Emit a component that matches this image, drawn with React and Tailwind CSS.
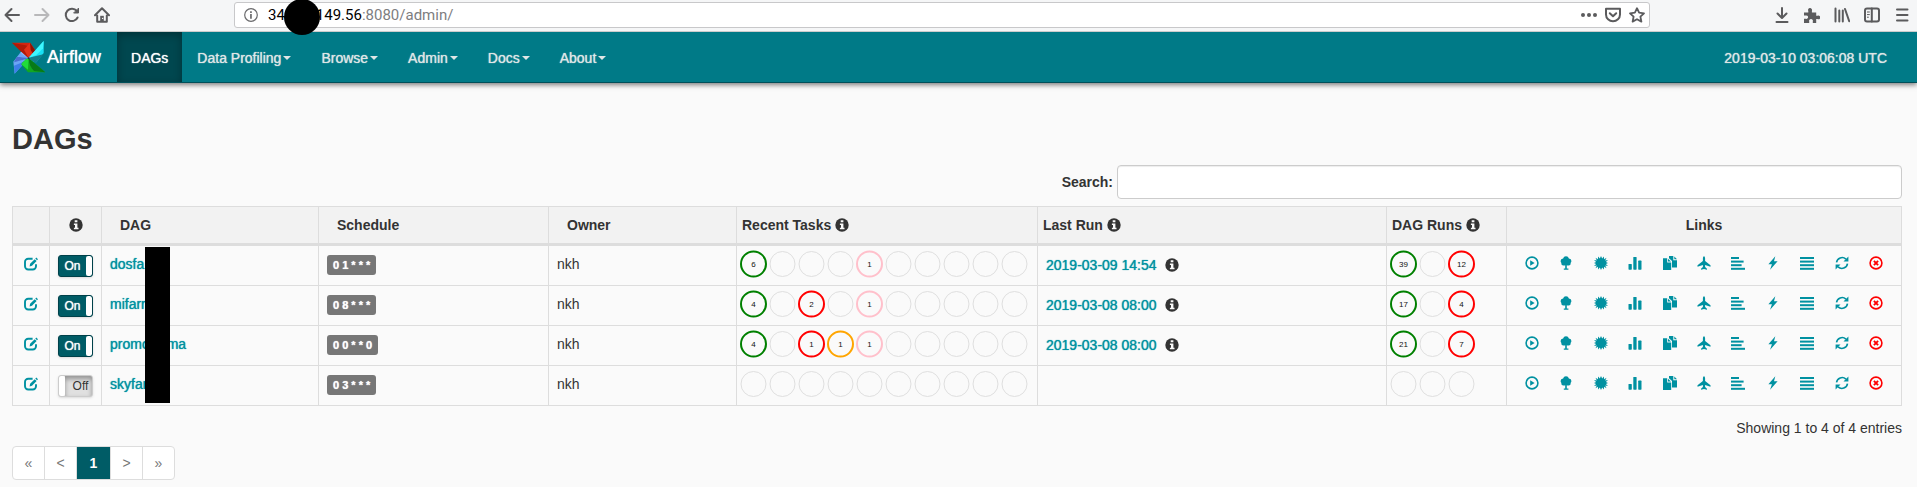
import React from "react";

/* ---------- browser toolbar icons (16px grid) ---------- */

const stroke = {
  fill: "none",
  stroke: "currentColor",
  strokeWidth: 2,
  strokeLinecap: "round",
  strokeLinejoin: "round",
};

const chromeIcons = {
  back: (
    <g {...stroke}>
      <path d="M15 8H1.5M7.5 2L1.5 8l6 6" />
    </g>
  ),
  forward: (
    <g {...stroke}>
      <path d="M1 8h13.5M8.5 2l6 6-6 6" />
    </g>
  ),
  reload: (
    <g {...stroke}>
      <path d="M13.6 10.5A6.2 6.2 0 1 1 12.8 4" />
      <path d="M14.5 1.5V6H10z" fill="currentColor" strokeWidth="1" />
    </g>
  ),
  home: (
    <g>
      <path {...stroke} d="M1 8.2L8 1.2l7 7M3.2 8.5v6.3h9.6V8.5" />
      <path d="M6.2 14V8.8h3.6V14z" fill="currentColor" />
      <circle cx="8.6" cy="11.4" r=".7" fill="#f5f6f7" />
    </g>
  ),
  dots: (
    <g fill="currentColor">
      <circle cx="2" cy="8" r="2" />
      <circle cx="8" cy="8" r="2" />
      <circle cx="14" cy="8" r="2" />
    </g>
  ),
  pocket: (
    <g {...stroke}>
      <path d="M1 1.8h14v5.7a7 6.8 0 0 1-14 0z" />
      <path d="M4.8 6.2L8 9.3l3.2-3.1" />
    </g>
  ),
  star: (
    <path
      {...stroke}
      strokeWidth="1.8"
      d="M8 1.2l2.1 4.5 4.9.6-3.6 3.4 1 4.9L8 12.2l-4.4 2.4 1-4.9L1 6.3l4.9-.6z"
    />
  ),
  download: (
    <g {...stroke}>
      <path d="M8 1v9.5M3.5 6.5L8 11l4.5-4.5M2.5 15h11" />
    </g>
  ),
  puzzle: (
    <path
      fill="currentColor"
      d="M0 5.5h4.3V4a2 2 0 1 1 3.6-.2v1.7h4.3v3.3h1.2a1.9 1.9 0 1 1 0 3.2h-1.2v4H8.8v-1.6a1.9 1.9 0 1 0-3.6 0V16H0v-4.2h1.8a1.7 1.7 0 1 0 0-3.2H0z"
    />
  ),
  library: (
    <g {...stroke}>
      <path d="M1.5 1.5v13M5.3 3.5v11M8.8 3.5v11M11 2l4.2 12.2" />
    </g>
  ),
  sidebar: (
    <g {...stroke}>
      <rect x="1" y="1.5" width="14" height="13" rx="2" />
      <path d="M7.8 1.5v13" />
      <path d="M3.4 5h2M3.4 7.6h2M3.4 10.2h1" strokeWidth="1" />
    </g>
  ),
  menu: (
    <g {...stroke}>
      <path d="M3 2.5h10.5M3 8h10.5M3 13.5h10.5" />
    </g>
  ),
};

function ChromeButton({ name, label, className = "text-[#5b5b5d]" }) {
  return (
    <button type="button" aria-label={label} className={className}>
      <svg viewBox="0 0 16 16" className="block size-4">
        {chromeIcons[name]}
      </svg>
    </button>
  );
}

/* ---------- table icons (14px grid) ---------- */

const glyphs = {
  edit: (
    <g>
      <path
        d="M8.6 1.7H4.2A3.2 3.2 0 0 0 1 4.9v4.4a3.2 3.2 0 0 0 3.2 3.2h4.6A3.2 3.2 0 0 0 12 9.3V7.2"
        fill="none"
        stroke="currentColor"
        strokeWidth="1.9"
      />
      <path fill="currentColor" d="M5.6 9.4l.5-2.6L10.7 2.2l1.9 1.9L8 8.8zM11.3 1.6l1-1 1.7 1.7-1 1z" />
    </g>
  ),
  play: (
    <g>
      <circle cx="7" cy="7" r="5.9" fill="none" stroke="currentColor" strokeWidth="1.6" />
      <path d="M5.2 4.2v5.6L9.6 7z" fill="currentColor" />
    </g>
  ),
  tree: (
    <path
      fill="currentColor"
      d="M7 .3a3 3 0 0 1 2.900 2.100A2.600 2.600 0 0 1 12.400 5a2.400 2.400 0 0 1-.8 1.900A2.200 2.200 0 0 1 9.600 9.500 2.600 2.600 0 0 1 7.800 9.200v3.200h1.600v1.300H4.800v-1.300h1.400V9.200a2.600 2.600 0 0 1-1.800.3A2.200 2.200 0 0 1 2.400 6.900 2.400 2.400 0 0 1 1.600 5a2.600 2.600 0 0 1 2.500-2.600A3 3 0 0 1 7 .3z"
    />
  ),
  burst: (
    <path
      fill="currentColor"
      d="M7 0L8.200 2.600 9.900.400 10.100 3.200 12.500 1.700 11.200 4.400 14 4 11.900 6 14 7 11.900 8 14 10 11.200 9.600 12.500 12.300 10.100 10.800 9.900 13.600 8.200 11.400 7 14 5.800 11.400 4.100 13.600 3.900 10.800 1.500 12.300 2.800 9.600 0 10 2.100 8 0 7 2.100 6 0 4 2.800 4.400 1.500 1.700 3.900 3.200 4.100.400 5.800 2.600z"
    />
  ),
  bars: (
    <g fill="currentColor">
      <rect x=".5" y="8" width="3.3" height="5.7" rx=".6" />
      <rect x="5.3" y="1" width="3.3" height="12.7" rx=".6" />
      <rect x="10.2" y="4.6" width="3.3" height="9.1" rx=".6" />
    </g>
  ),
  duplicate: (
    <g fill="currentColor">
      <path d="M0 2.200h4.200v4.200h4v7.500H0z" />
      <path d="M5 2.700l3 2.900H5z" />
      <path d="M6 0h4.300v4.300h3.700v7.300H9V5L6 2.200z" />
      <path d="M11.300.600l2.700 2.700h-2.700z" />
    </g>
  ),
  plane: (
    <path
      fill="currentColor"
      d="M7 .2c.7 0 1.100 1.200 1.100 2.200v2.700l5.400 4.100v1.600L8.100 8.900v2.200l1.900 1.600v1L7 12.900l-3 .8v-1l1.900-1.600V8.900L.5 10.800V9.200l5.400-4.100V2.400C5.900 1.400 6.300.2 7 .2z"
    />
  ),
  alignLeft: (
    <g fill="currentColor">
      <rect x="0" y="1" width="8" height="2" />
      <rect x="0" y="4.6" width="12.6" height="2" />
      <rect x="0" y="8.2" width="10.6" height="2" />
      <rect x="0" y="11.8" width="14" height="2" />
    </g>
  ),
  flash: <path fill="currentColor" d="M9.300.3L2.400 8.200h3.500L4.100 13.800l7.500-8.500H8z" />,
  justify: (
    <g fill="currentColor">
      <rect x="0" y="1" width="14" height="2" />
      <rect x="0" y="4.6" width="14" height="2" />
      <rect x="0" y="8.2" width="14" height="2" />
      <rect x="0" y="11.8" width="14" height="2" />
    </g>
  ),
  refresh: (
    <g>
      <path
        d="M1.500 6.400A5.600 5.600 0 0 1 10.900 3.100M12.500 7.600A5.600 5.600 0 0 1 3.100 10.900"
        fill="none"
        stroke="currentColor"
        strokeWidth="1.6"
      />
      <path fill="currentColor" d="M13.400.600v4.900H8.500zM.600 13.400V8.500h4.900z" />
    </g>
  ),
  remove: (
    <g fill="none" stroke="currentColor">
      <circle cx="7" cy="7" r="5.9" strokeWidth="1.6" />
      <path d="M4.900 4.900l4.200 4.200M9.100 4.900L4.900 9.100" strokeWidth="1.9" />
    </g>
  ),
  info: (
    <g>
      <circle cx="7" cy="7" r="6.7" fill="currentColor" />
      <path fill="#f9f9f9" d="M5.700 2.200h2.700v2H5.700zM4.900 5.400h3.500v4.400h1.100v1.500H4.900V9.800H6V6.900H4.900z" />
    </g>
  ),
};

function Glyph({ name, className = "" }) {
  return (
    <svg viewBox="0 0 14 14" aria-hidden="true" className={`size-3.5 shrink-0 ${className}`}>
      {glyphs[name]}
    </svg>
  );
}

function AirflowLogo() {
  return (
    <svg viewBox="0 0 99 99" aria-hidden="true" className="size-[33px] shrink-0">
      <path d="M50 52L8 98 4 62 24 36c10 2 20 8 26 16z" fill="#6ba5f5" />
      <path d="M50 52L8 98 6 74c14-6 30-10 44-22z" fill="#3d7fe8" />
      <path d="M50 52L6 64l8-16c12 0 24 2 36 4z" fill="#4a6fd0" />
      <path d="M24 36c3-4 8-8 13-10 7 6 12 15 13 26z" fill="#8ab8fa" />
      <path d="M50 52L0 5h54l19 28-6 12z" fill="#d32510" />
      <path d="M50 52L22 27 0 5l40 8c14 4 24 12 28 26z" fill="#b01a08" />
      <path d="M50 52L36 26l18-21 19 28z" fill="#e23018" />
      <path d="M54 5l19 28-6 12-11-18z" fill="#8c1204" />
      <path d="M50 50L95 0v36L73 64c-10-1-18-6-23-14z" fill="#18e0f5" />
      <path d="M50 50l44-10-21 24c-10-1-18-6-23-14z" fill="#14808e" />
      <path d="M50 50L95 0l-2 22-20 20z" fill="#3ff6fd" />
      <path d="M50 52l50 42H48L28 70c6-8 12-14 22-18z" fill="#12a822" />
      <path d="M50 52l-2 34-20-16c6-8 12-14 22-18z" fill="#20dc3a" />
      <path d="M50 52l50 42-34-4c-9-8-15-21-16-38z" fill="#087a18" />
      <circle cx="50" cy="52" r="3" fill="#123f4c" />
    </svg>
  );
}

/* ---------- data ---------- */

const menuItems = ["Data Profiling", "Browse", "Admin", "Docs", "About"];

const statusColors = {
  success: "#008000",
  failed: "#ff0000",
  retry: "#ffa500",
  upstream: "#ffc0cb",
};

const none = [null, null];
const blanks = [none, none, none, none, none];

const dags = [
  {
    id: "dosfa",
    on: true,
    schedule: "0 1 * * *",
    owner: "nkh",
    tasks: [["success", 6], none, none, none, ["upstream", 1], ...blanks],
    lastRun: "2019-03-09 14:54",
    runs: [["success", 39], none, ["failed", 12]],
  },
  {
    id: "mifarr",
    on: true,
    schedule: "0 8 * * *",
    owner: "nkh",
    tasks: [["success", 4], none, ["failed", 2], none, ["upstream", 1], ...blanks],
    lastRun: "2019-03-08 08:00",
    runs: [["success", 17], none, ["failed", 4]],
  },
  {
    id: "promo",
    tail: "ma",
    on: true,
    schedule: "0 0 * * 0",
    owner: "nkh",
    tasks: [["success", 4], none, ["failed", 1], ["retry", 1], ["upstream", 1], ...blanks],
    lastRun: "2019-03-08 08:00",
    runs: [["success", 21], none, ["failed", 7]],
  },
  {
    id: "skyfar",
    on: false,
    schedule: "0 3 * * *",
    owner: "nkh",
    tasks: [...blanks, ...blanks],
    lastRun: null,
    runs: [none, none, none],
  },
];

const links = [
  ["play", "Trigger Dag"],
  ["tree", "Tree View"],
  ["burst", "Graph View"],
  ["bars", "Tasks Duration"],
  ["duplicate", "Task Tries"],
  ["plane", "Landing Times"],
  ["alignLeft", "Gantt View"],
  ["flash", "Code View"],
  ["justify", "Logs"],
  ["refresh", "Refresh"],
  ["remove", "Delete Dag"],
];

/* ---------- pieces ---------- */

function StatusCircles({ items }) {
  return (
    <svg width={items.length * 29} height="28" className="block">
      {items.map(([state, count], i) => (
        <g key={i}>
          <circle
            cx={i * 29 + 14.5}
            cy="14"
            r="12.5"
            fill="none"
            stroke={state ? statusColors[state] : "#dfdfdf"}
            strokeWidth={state ? 2 : 1}
          />
          {state && (
            <text x={i * 29 + 14.5} y="17" textAnchor="middle" fontSize="8" fill="#111">
              {count}
            </text>
          )}
        </g>
      ))}
    </svg>
  );
}

function Toggle({ on, label }) {
  return (
    <label className="block cursor-pointer">
      <input type="checkbox" defaultChecked={on} aria-label={label} className="peer sr-only" />
      <span className="hidden h-[22px] w-[35px] items-stretch justify-between overflow-hidden rounded-[3px] border border-[#00414a] bg-[#005c66] shadow-sm peer-checked:flex">
        <span className="flex-1 text-center text-xs leading-5 text-white [text-shadow:0_0_1px_#fff]">On</span>
        <span className="w-1.5 rounded-[2px] bg-white" />
      </span>
      <span className="flex h-[22px] w-[35px] items-stretch overflow-hidden rounded-[3px] border border-[#cccccc] bg-[#e0e0e0] shadow-sm peer-checked:hidden">
        <span className="w-1.5 shrink-0 rounded-[2px] bg-white" />
        <span className="flex-1 pl-1 text-center text-xs leading-5 text-[#333] shadow-[inset_0_3px_5px_rgba(0,0,0,0.35)]">
          Off
        </span>
      </span>
    </label>
  );
}

function PageLink({ children, label, className = "w-[31px] text-[#777]" }) {
  return (
    <li>
      <a href="#" aria-label={label} className={`flex h-8 items-center justify-center ${className}`}>
        {children}
      </a>
    </li>
  );
}

const th = "border border-[#dddddd] border-b-[3px] py-2 font-bold";
const td = "border border-[#dddddd] p-2 align-top";
const tdLow = "border border-[#dddddd] px-2 pt-[9px] align-top";

export default function App() {
  return (
    <div className="bg-[#fafafa] pb-2 font-['Liberation_Sans',Arial,sans-serif] text-sm leading-5 text-[#333]">
      <div className="relative flex h-8 items-center border-b border-[#cccccc] bg-[#f5f6f7] pr-[7px] pb-0.5 pl-1">
        <div className="flex gap-3.5">
          <ChromeButton name="back" label="Back" />
          <ChromeButton name="forward" label="Forward" className="text-[#b8b8ba]" />
          <ChromeButton name="reload" label="Reload" />
          <ChromeButton name="home" label="Home" />
        </div>
        <div className="mx-[124px] flex h-[26px] flex-1 items-center rounded-[3px] border border-[#c8c8ca] bg-white pr-1 pl-[9px]">
          <svg viewBox="0 0 14 14" aria-hidden="true" className="size-3.5 shrink-0 text-[#6a6a6c]">
            <circle cx="7" cy="7" r="6.3" fill="none" stroke="currentColor" strokeWidth="1.2" />
            <path d="M6.100 6h1.700v4.700H6.100zM6.100 3.200h1.700v1.700H6.100z" fill="currentColor" />
          </svg>
          <div className="ml-2.5 flex flex-1 pt-px font-[Roboto,sans-serif] text-[15px] text-black">
            <span>34.</span>
            <span className="relative w-[27px]">
              <span className="absolute -top-1.5 -left-[5px] z-10 size-9 rounded-full bg-black" />
            </span>
            <span>
              149.56<span className="text-[#7d7d7f]">:8080/admin/</span>
            </span>
          </div>
          <div className="flex gap-2">
            <ChromeButton name="dots" label="Page actions" />
            <ChromeButton name="pocket" label="Save to Pocket" />
            <ChromeButton name="star" label="Bookmark" />
          </div>
        </div>
        <div className="flex gap-3.5">
          <ChromeButton name="download" label="Downloads" />
          <ChromeButton name="puzzle" label="Extensions" />
          <ChromeButton name="library" label="Library" />
          <ChromeButton name="sidebar" label="Sidebars" />
          <ChromeButton name="menu" label="Menu" />
        </div>
      </div>

      <nav className="flex h-[51px] items-stretch border-b border-[#004f59] bg-[#007a87] pl-3 text-[#dfe6e6] shadow-[0_2px_5px_rgba(0,0,0,0.5)] [text-shadow:0_0_1px_currentColor]">
        <a href="#" className="flex items-center gap-0.5 pr-4 text-lg text-white">
          <AirflowLogo />
          Airflow
        </a>
        <a
          href="#"
          className="flex items-center bg-[#00474f] px-3.5 pt-0.5 text-white shadow-[inset_0_3px_9px_rgba(0,0,0,0.3)]"
        >
          DAGs
        </a>
        {menuItems.map((item) => (
          <button
            key={item}
            type="button"
            className="flex items-center gap-0.5 px-[15px] pt-0.5 [text-shadow:0_0_1px_currentColor]"
          >
            {item}
            <span className="border-x-4 border-t-4 border-x-transparent border-t-current" />
          </button>
        ))}
        <span className="ml-auto flex items-center pt-0.5 pr-[30px]">2019-03-10 03:06:08 UTC</span>
      </nav>

      <main className="pt-10 pr-[15px] pl-3">
        <h1 className="text-[29px] leading-8 font-bold">DAGs</h1>

        <div className="mt-2.5 flex items-center justify-end gap-1">
          <label htmlFor="dag-search" className="font-bold">
            Search:
          </label>
          <input
            id="dag-search"
            type="search"
            className="h-[34px] w-[785px] max-w-full rounded border border-[#cccccc] bg-white px-3 shadow-[inset_0_1px_1px_rgba(0,0,0,0.075)] outline-none"
          />
        </div>

        <table className="mt-[7px] w-full table-fixed border-collapse">
          <colgroup>
            <col className="w-[37px]" />
            <col className="w-[52px]" />
            <col className="w-[217px]" />
            <col className="w-[230px]" />
            <col className="w-[188px]" />
            <col className="w-[301px]" />
            <col />
            <col className="w-[120px]" />
            <col className="w-[395px]" />
          </colgroup>
          <thead className="bg-[#f2f2f2] text-left">
            <tr>
              <th className={th} aria-label="Edit" />
              <th className={th} aria-label="Status">
                <Glyph name="info" className="mx-auto" />
              </th>
              <th className={`${th} px-[18px]`}>DAG</th>
              <th className={`${th} px-[18px]`}>Schedule</th>
              <th className={`${th} px-[18px]`}>Owner</th>
              <th className={`${th} px-[5px]`}>
                <span className="flex items-center gap-1">
                  Recent Tasks <Glyph name="info" />
                </span>
              </th>
              <th className={`${th} px-[5px]`}>
                <span className="flex items-center gap-1">
                  Last Run <Glyph name="info" />
                </span>
              </th>
              <th className={`${th} px-[5px]`}>
                <span className="flex items-center gap-1">
                  DAG Runs <Glyph name="info" />
                </span>
              </th>
              <th className={`${th} text-center`}>Links</th>
            </tr>
          </thead>
          <tbody>
            {dags.map((dag, row) => (
              <tr key={dag.id} className="h-10 first:h-[41px]">
                <td className={td}>
                  <a href="#" aria-label="Edit" className="flex justify-center pt-[3px] text-[#0091a1]">
                    <Glyph name="edit" />
                  </a>
                </td>
                <td className={tdLow}>
                  <Toggle on={dag.on} label={`${dag.id} enabled`} />
                </td>
                <td className={`${td} relative`}>
                  <a href="#" className="flex gap-[17px] text-[#0091a1] [text-shadow:0_0_1px_#0091a1]">
                    <span>{dag.id}</span>
                    {dag.tail && <span>{dag.tail}</span>}
                  </a>
                  {row === 0 && <span className="absolute top-px left-[43px] z-10 h-[156px] w-[25px] bg-black" />}
                </td>
                <td className={tdLow}>
                  <a
                    href="#"
                    className="inline-block rounded-[3px] bg-[#777777] px-1.5 align-top text-[11px] leading-5 font-bold text-white [text-shadow:0_0_1px_#fff]"
                  >
                    {dag.schedule}
                  </a>
                </td>
                <td className={td}>{dag.owner}</td>
                <td className="border border-[#dddddd] px-0.5 pt-1 align-top">
                  <StatusCircles items={dag.tasks} />
                </td>
                <td className={tdLow}>
                  {dag.lastRun && (
                    <span className="flex items-center gap-2">
                      <a href="#" className="text-[#0091a1] [text-shadow:0_0_1px_#0091a1]">
                        {dag.lastRun}
                      </a>
                      <Glyph name="info" />
                    </span>
                  )}
                </td>
                <td className="border border-[#dddddd] px-0.5 pt-1 align-top">
                  <StatusCircles items={dag.runs} />
                </td>
                <td className="border border-[#dddddd] px-[18px] pt-2.5 align-top">
                  <div className="flex justify-between">
                    {links.map(([icon, label]) => (
                      <a
                        key={icon}
                        href="#"
                        aria-label={label}
                        className={icon === "remove" ? "text-[#ff0000]" : "text-[#0091a1]"}
                      >
                        <Glyph name={icon} />
                      </a>
                    ))}
                  </div>
                </td>
              </tr>
            ))}
          </tbody>
        </table>

        <p className="mt-3 text-right">Showing 1 to 4 of 4 entries</p>

        <ul className="mt-2 inline-flex divide-x divide-[#dddddd] overflow-hidden rounded border border-[#dddddd] bg-white">
          <PageLink label="First page">«</PageLink>
          <PageLink label="Previous page">&lt;</PageLink>
          <PageLink className="w-[33px] bg-[#005c66] font-bold text-white">1</PageLink>
          <PageLink label="Next page">&gt;</PageLink>
          <PageLink label="Last page">»</PageLink>
        </ul>
      </main>
    </div>
  );
}
